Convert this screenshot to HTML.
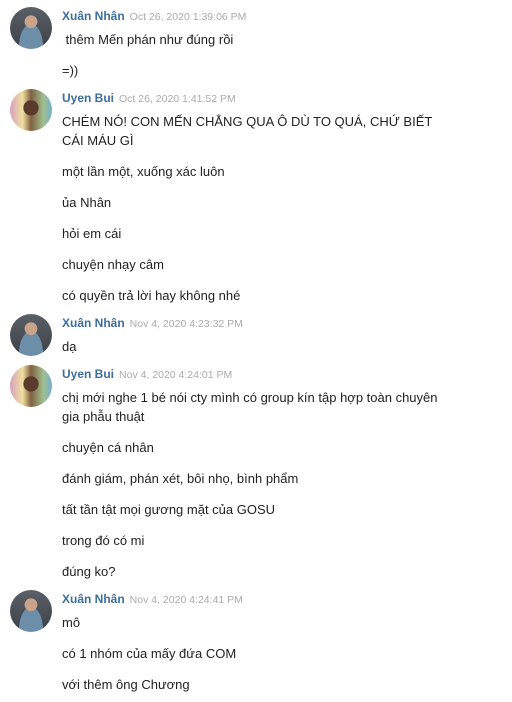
<!DOCTYPE html>
<html><head><meta charset="utf-8"><style>
body{margin:0;background:#fff;font-family:"Liberation Sans",sans-serif;color:#222;width:512px;height:702px;overflow:hidden}
.g{position:relative;padding:7px 0 2.5px 62px}
.av{position:absolute;left:10px;top:7px;width:42px;height:42px;border-radius:50%;overflow:hidden}
.x{background:radial-gradient(circle at 50% 35%,#c9a48a 0 18%,transparent 19%),radial-gradient(ellipse at 50% 95%,#6d8ea8 0 40%,transparent 41%),linear-gradient(#5b6068,#3c4046)}
.u{background:radial-gradient(circle at 50% 45%,#5a3a2a 0 24%,transparent 25%),linear-gradient(90deg,#d8a0c0,#f0e0a0 30%,#806040 50%,#a0c090 80%,#70b0d0)}
.h{height:18px;line-height:18px;white-space:nowrap}
.n{font-weight:bold;font-size:12px;color:#3d6e9c}
.t{font-size:10.5px;color:#aaa;margin-left:5px}
p{margin:12px 0 0;font-size:13px;line-height:19px;white-space:nowrap}
p.f{margin-top:4.5px}
</style></head><body>
<div class="g"><div class="av x"></div><div class="h"><span class="n">Xuân Nhân</span><span class="t">Oct 26, 2020 1:39:06 PM</span></div>
<p class="f">&nbsp;thêm Mến phán như đúng rồi</p><p>=))</p></div>
<div class="g"><div class="av u"></div><div class="h"><span class="n">Uyen Bui</span><span class="t">Oct 26, 2020 1:41:52 PM</span></div>
<p class="f">CHÉM NÓ! CON MẾN CHẲNG QUA Ô DÙ TO QUÁ, CHỨ BIẾT<br>CÁI MÁU GÌ</p><p>một lần một, xuống xác luôn</p><p>ủa Nhân</p><p>hỏi em cái</p><p>chuyện nhạy câm</p><p>có quyền trả lời hay không nhé</p></div>
<div class="g"><div class="av x"></div><div class="h"><span class="n">Xuân Nhân</span><span class="t">Nov 4, 2020 4:23:32 PM</span></div>
<p class="f">dạ</p></div>
<div class="g"><div class="av u"></div><div class="h"><span class="n">Uyen Bui</span><span class="t">Nov 4, 2020 4:24:01 PM</span></div>
<p class="f">chị mới nghe 1 bé nói cty mình có group kín tập hợp toàn chuyên<br>gia phẫu thuật</p><p>chuyện cá nhân</p><p>đánh giám, phán xét, bôi nhọ, bình phẩm</p><p>tất tần tật mọi gương mặt của GOSU</p><p>trong đó có mi</p><p>đúng ko?</p></div>
<div class="g"><div class="av x"></div><div class="h"><span class="n">Xuân Nhân</span><span class="t">Nov 4, 2020 4:24:41 PM</span></div>
<p class="f">mô</p><p>có 1 nhóm của mấy đứa COM</p><p>với thêm ông Chương</p></div>
</body></html>
